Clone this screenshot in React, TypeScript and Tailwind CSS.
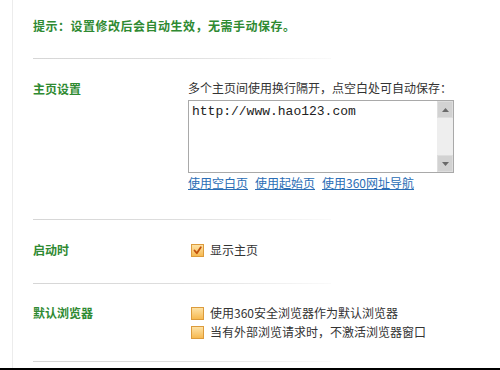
import React from "react";

const font = { fontFamily: '"Noto Sans CJK SC", "Liberation Sans", sans-serif' };

function Divider() {
  return (
    <div className="h-px w-[298px] bg-gradient-to-r from-[#d6d6d6] via-[#dedede] to-[#fafafa]" />
  );
}

function Checkbox({ checked }: { checked?: boolean }) {
  return (
    <div className="relative h-[13px] w-[13px] shrink-0 border border-[#dc9b3c] bg-gradient-to-b from-[#fde2a4] to-[#f6b94e]">
      {checked && (
        <svg viewBox="0 0 11 11" className="absolute left-0 top-0 h-[11px] w-[11px]">
          <path d="M2.5 5.5 L4.8 8.2 L8.8 2.2" stroke="#c0500a" strokeWidth="1.8" fill="none" strokeLinecap="round" strokeLinejoin="round" />
        </svg>
      )}
    </div>
  );
}

function Label({ children }: { children: React.ReactNode }) {
  return (
    <div className="w-[155px] shrink-0 text-[12px] font-bold leading-[14px] text-[#2f8a32]">{children}</div>
  );
}

export default function App() {
  return (
    <div className="h-[370px] w-[500px] overflow-hidden border-b-2 border-black bg-white" style={font}>
      <div className="ml-[12px] h-full border-l border-[#ececec] pl-[20px]">
        {/* title */}
        <div className="h-[58px] pt-[19px]">
          <div className="text-[12px] font-bold leading-[14px] tracking-[0.5px] text-[#2f8a32]">
            提示：设置修改后会自动生效，无需手动保存。
          </div>
        </div>
        <Divider />

        {/* homepage */}
        <div className="flex h-[160px] items-start">
          <div className="pt-[23px]">
            <Label>主页设置</Label>
          </div>
          <div className="pt-[22px]">
            <div className="text-[12px] leading-[14px] text-[#333]">多个主页间使用换行隔开，点空白处可自动保存：</div>
            <div className="mt-[5px] flex h-[73px] w-[266px] border border-[#a9a9a9] bg-white">
              <div className="flex-1 pl-[3px] pt-[3px] text-[13px] leading-[16px] text-[#222]" style={{ fontFamily: '"Liberation Mono", monospace' }}>
                http://www.hao123.com
              </div>
              <div className="flex w-[16px] flex-col bg-[#eeeeee]">
                <div className="flex h-[17px] items-center justify-center border border-[#dedede] bg-[#d2d2d2]">
                  <svg width="7" height="4" viewBox="0 0 7 4"><path d="M0 4 L3.5 0 L7 4 Z" fill="#6a6a6a" /></svg>
                </div>
                <div className="flex-1" />
                <div className="flex h-[17px] items-center justify-center border border-[#dedede] bg-[#d2d2d2]">
                  <svg width="7" height="4" viewBox="0 0 7 4"><path d="M0 0 L3.5 4 L7 0 Z" fill="#6a6a6a" /></svg>
                </div>
              </div>
            </div>
            <div className="mt-[3px] flex gap-[7px] text-[12px] leading-[14px] text-[#2a6db5] underline">
              <span>使用空白页</span>
              <span>使用起始页</span>
              <span>使用360网址导航</span>
            </div>
          </div>
        </div>
        <Divider />

        {/* startup */}
        <div className="flex h-[63px] items-start pt-[23px]">
          <Label>启动时</Label>
          <div className="flex items-center gap-[6px] pl-[3px] text-[12px] leading-[14px] text-[#333]">
            <Checkbox checked />
            <span>显示主页</span>
          </div>
        </div>
        <Divider />

        {/* default browser */}
        <div className="flex h-[77px] items-start pt-[22px]">
          <Label>默认浏览器</Label>
          <div className="flex flex-col gap-[5px] pl-[3px] text-[12px] leading-[14px] text-[#333]">
            <div className="flex items-center gap-[6px]">
              <Checkbox />
              <span>使用360安全浏览器作为默认浏览器</span>
            </div>
            <div className="flex items-center gap-[6px]">
              <Checkbox />
              <span>当有外部浏览请求时，不激活浏览器窗口</span>
            </div>
          </div>
        </div>
        <Divider />
      </div>
    </div>
  );
}
